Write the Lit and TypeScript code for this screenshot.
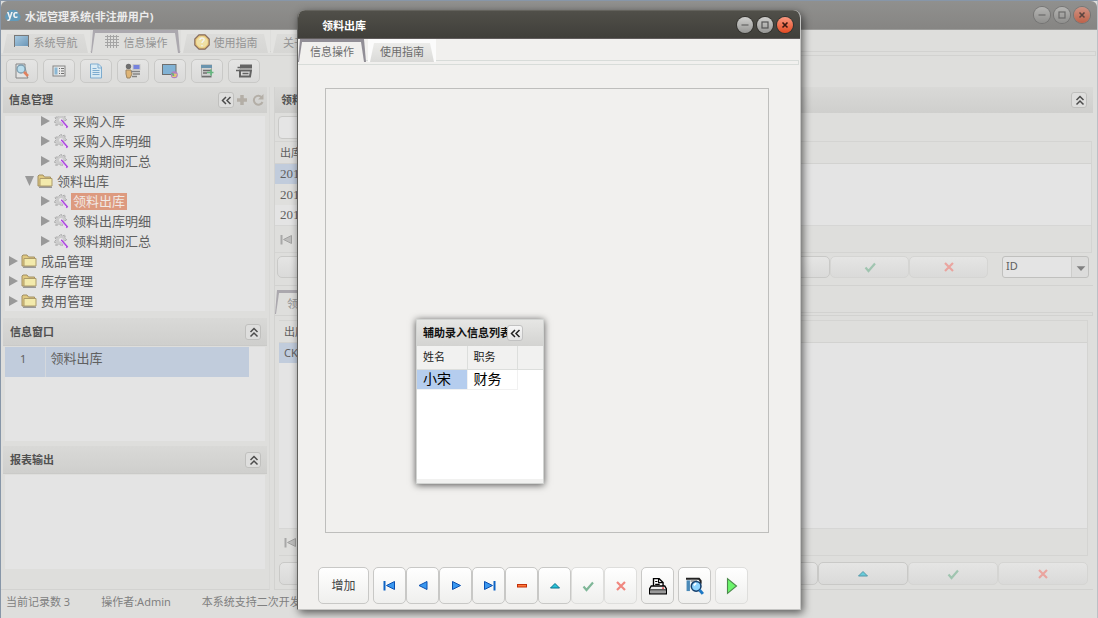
import { LitElement, html, css, svg, nothing } from "lit";
import { customElement, property } from "lit/decorators.js";

const glyphs: Record<string, unknown> = {
  up2: svg`<path d="M4.500 7 8 3.500 11.500 7M4.500 11.500 8 8l3.500 3.500" fill="none" stroke="currentColor" stroke-width="1.500"/>`,
  left2: svg`<path d="M7 4 3.500 7.500 7 11M11.500 4 8 7.500 11.500 11" fill="none" stroke="currentColor" stroke-width="1.500"/>`,
  min: svg`<path d="M4.500 8h7" stroke="#555" stroke-width="1.200"/>`,
  max: svg`<rect x="5" y="5" width="6" height="6" fill="none" stroke="#555" stroke-width="1.200"/>`,
  close: svg`<path d="M5.500 5.500l5 5M10.500 5.500l-5 5" stroke="#3b1710" stroke-width="1.600"/>`,
  logo: svg`<path d="M4 14a4 4 0 0 1-2.500-7A4.500 4.500 0 0 1 7 3a5 5 0 0 1 6.500 3.500A4 4 0 0 1 12 14z" fill="#5d9cc0"/><text x="2" y="11" font-family="Noto Sans" font-weight="bold" font-size="10" fill="#fff">yc</text>`,
  screen: svg`<defs><linearGradient id="s" x2="1" y2="1"><stop stop-color="#8fc4e8"/><stop offset="1" stop-color="#2f71a5"/></linearGradient></defs><rect x="0.500" y="1.500" width="14" height="11" fill="url(#s)" stroke="#444"/><path d="M1 12.500h13" stroke="#ddd"/>`,
  grid: svg`<path d="M1 2.500h14M1 5.500h14M1 8.500h14M1 11.500h14M3.500 1v13M6.500 1v13M9.500 1v13M12.500 1v13" stroke="#888"/>`,
  help: svg`<path d="M5 .8h6l4.200 4.200v6L11 15.200H5L.8 11V5z" fill="#f2b93f" stroke="#5a3320" stroke-width="1.200"/><circle cx="8" cy="8" r="5.800" fill="#fbe48a"/><path d="M6 6c0-3 5-2 4 0-.5 1-2 1.500-2 3M8 11v1.300" fill="none" stroke="#fff" stroke-width="1.500"/>`,
  find: svg`<path d="M2 1h9v3l2 9 1 2H2z" fill="#e8e8e8" stroke="#555"/><circle cx="7" cy="6" r="4" fill="#a5dcf5" stroke="#4a7a96" stroke-width="1.300"/><path d="M10 9l4 4" stroke="#e2501c" stroke-width="2.500"/>`,
  list: svg`<rect x="2" y="3" width="12" height="10" fill="#eee" stroke="#555"/><rect x="3.500" y="4.500" width="3" height="7" fill="#5ea3cf"/><path d="M8 5.500h1M8 8h1M8 10.500h1M10 5.500h3M10 8h3M10 10.500h3" stroke="#333"/>`,
  doc: svg`<path d="M2.500 1h8l3 3v11h-11z" fill="#d5f0ff" stroke="#4a91c8"/><path d="M10 1v4h4M4.500 5.500h4M4.500 7.500h7M4.500 9.500h7M4.500 11.500h7" fill="none" stroke="#4a91c8"/>`,
  people: svg`<circle cx="3.500" cy="3.500" r="2.700" fill="#333"/><path d="M1 7h5l1 4-2 4H2l-1-4z" fill="#e0a040" stroke="#7b541e"/><rect x="8" y="1.500" width="7" height="5" fill="#3c50dc" stroke="#bbb"/><path d="M6 8.500h9M8 11h7M7 13.500h5" stroke="#555" stroke-width="1.500"/>`,
  world: svg`<rect x="0.500" y="1.500" width="13.500" height="10" fill="#4f9bd0" stroke="#333"/><circle cx="12.300" cy="11.800" r="3.500" fill="#9a4fb0"/><path d="M10 14c1-4 3-4 5-3l-1 3z" fill="#e8b840"/><path d="M9.500 11c1-1 2 0 2 2" stroke="#2f9b4b" stroke-width="1.600" fill="none"/>`,
  add: svg`<rect x="2.500" y="2" width="10" height="12" fill="#ccc" stroke="#888"/><rect x="2" y="2" width="11" height="3" fill="#2b6b94"/><path d="M4 7.500h8M4 10h4M3 13.500h9" stroke="#333" stroke-width="1.400"/><path d="M8 9.500h6.500M12 6.500v6" stroke="#21a34c" stroke-width="1.600"/>`,
  form: svg`<path d="M5 2.500h10v2H5zM4 7.500h11l-1 6H4z" fill="#ddd" stroke="#222" stroke-width="2"/><path d="M1.500 4.500h3M0 7.500h3M6.500 10.500h6" stroke="#222" stroke-width="1.600"/>`,
  plus: svg`<path d="M8 3v10M3 8h10" stroke="#a39b90" stroke-width="3.500"/>`,
  redo: svg`<path d="M12 5.500A4.500 4.500 0 1 0 12.500 10" fill="none" stroke="#a39b90" stroke-width="2"/><path d="M13.500 2v5.500H8z" fill="#a39b90"/>`,
  folder: svg`<path d="M1 13V3l1-1h4l1.500 2h6V13z" fill="#dfc060" stroke="#8c7336"/><path d="M3 13V5.500h12V13z" fill="#f8ec9a" stroke="#9d8442"/><path d="M2 14.200h13" stroke="#555"/>`,
  gear: svg`<path d="M8 1l1 2 3-1v3l2 2-3 1-2 5-3-2-3 2 0-3-2-1 2-2-1-3 3 0z" fill="#c4c4c4" stroke="#999" stroke-dasharray="2 1"/><circle cx="8" cy="7" r="2" fill="#eee"/><path d="M8 7l6.500 7.500" stroke="#9b10e0" stroke-width="2"/><path d="M7 7l6 7" stroke="#f3e2fb"/>`,
  first: svg`<path d="M2.500 3v9.500" stroke="#0c63c4" stroke-width="2"/><path d="M12.500 3.500v8L4.500 7.500z" fill="#3a98f0" stroke="#0a4fb0"/>`,
  prev: svg`<path d="M12 3.500v8L4 7.500z" fill="#3a98f0" stroke="#0a4fb0"/>`,
  next: svg`<path d="M4.500 3.500v8l8-4z" fill="#3a98f0" stroke="#0a4fb0"/>`,
  last: svg`<path d="M13.500 3v9.500" stroke="#0c63c4" stroke-width="2"/><path d="M3.500 3.500v8l8-4z" fill="#3a98f0" stroke="#0a4fb0"/>`,
  del: svg`<rect x="3.500" y="6.500" width="9" height="2.500" fill="#ff7a3d" stroke="#c22f08"/>`,
  edit: svg`<path d="M3.500 10 8 5.500l4.500 4.500z" fill="#29c3d8" stroke="#08718c"/>`,
  ok: svg`<path d="M3.500 8.500 6.500 12l6.500-7.500" fill="none" stroke="#7fb798" stroke-width="2.200"/>`,
  no: svg`<path d="M4 4l8 8M12 4l-8 8" stroke="#f0867e" stroke-width="2.200"/>`,
  print: svg`<path d="M4 8V1.500h5L12.500 5v3" fill="#fff" stroke="#000" stroke-width="1.200"/><path d="M8.500 1.500V5h4M5.500 4h2M5.500 6.500h4" fill="none" stroke="#000"/><path d="M2 8h12l1.500 2.500V15H.5v-4.500z" fill="#eee" stroke="#000" stroke-width="1.200"/><path d="M1 11.500h14" stroke="#000"/><path d="M1 13.300h14" stroke="#999" stroke-width="2"/><circle cx="12.500" cy="9.800" r=".8" fill="#d22"/>`,
  preview: svg`<path d="M0 1.500h11.500l1.500 2V6" fill="none" stroke="#222" stroke-width="1.800"/><rect x="0.500" y="3" width="3" height="9.500" fill="#4a8ab8"/><path d="M4 3.500h6" stroke="#aaa" stroke-width="2"/><circle cx="9" cy="8.300" r="4.300" fill="#8fd4ff" stroke="#16406e" stroke-width="1.400"/><path d="M7 7.500l2-2" stroke="#fff" stroke-width="1.500"/><path d="M12 11.500l3 3.500" stroke="#1d78c4" stroke-width="2.600"/>`,
  run: svg`<path d="M4 1.500l8 6.500-8 6.500z" fill="#6cf56c" stroke="#4b8a4b"/>`,
  down: svg`<path d="M3 6h10l-5 5.500z" fill="#777"/>`,
};

@customElement("ui-icon")
export class UiIcon extends LitElement {
  @property() name = "";
  static styles = css`
    :host { display: inline-flex; width: 16px; height: 16px; flex: none; }
    svg { width: 100%; height: 100%; display: block; }
  `;
  render() {
    return html`<svg viewBox="0 0 16 16" aria-hidden="true">${glyphs[this.name] ?? nothing}</svg>`;
  }
}

const base = css`
  * { box-sizing: border-box; }
  :host { font: 11px/16px "Noto Sans", "Noto Sans CJK SC", sans-serif; }
  button { font: inherit; color: inherit; padding: 0; margin: 0; cursor: pointer; }
  table { border-collapse: collapse; border-spacing: 0; table-layout: fixed; }
  th, td { padding: 0; text-align: left; font-weight: normal; }
  h1, h2 { margin: 0; font-size: inherit; font-weight: bold; }
  .circles { display: flex; gap: 4px; }
  .circle {
    width: 16px; height: 16px; border: 0; border-radius: 50%; display: grid; place-items: center;
    background: linear-gradient(#cfcfcd, #969694); box-shadow: 0 0 0 1px #33322e;
  }
  .circle.close { background: linear-gradient(#fa9880, #e44a22); }
  .mini {
    width: 16px; height: 16px; border: 1px solid #c2c2c2; border-radius: 3px; flex: none;
    background: linear-gradient(#f6f6f6, #e4e4e4); display: grid; place-items: center;
  }
  .btn {
    display: grid; place-items: center; border: 1px solid #c8c8c6; border-radius: 5px;
    background: linear-gradient(#ffffff, #efefed);
  }
  .tabs { display: flex; }
  .tab {
    position: relative; isolation: isolate; border: 0; background: none; display: flex;
    align-items: center; justify-content: center; white-space: nowrap;
  }
  .tab::before, .tab::after { content: ""; position: absolute; z-index: -1; }
  .tab::before { inset: 0; background: var(--edge); }
  .tab::after { inset: 4px 0 0; background: var(--face); clip-path: polygon(6px 0, calc(100% - 6px) 0, calc(100% - 2px) 100%, 2px 100%); }
  .tab.on::before { background: var(--rim); clip-path: polygon(2px 0, calc(100% - 2px) 0, 100% 100%, 0 100%); }
  .tab.on::after { inset: 3px 0 0; background: var(--page); clip-path: polygon(4px 0, calc(100% - 5px) 0, calc(100% - 2px) 100%, 1px 100%); }
`;

const circles = () => html`<div class="circles">
  <button class="circle" aria-label="最小化"><ui-icon name="min"></ui-icon></button>
  <button class="circle" aria-label="最大化"><ui-icon name="max"></ui-icon></button>
  <button class="circle close" aria-label="关闭"><ui-icon name="close"></ui-icon></button>
</div>`;

@customElement("entry-dialog")
export class EntryDialog extends LitElement {
  static styles = [base, css`
    :host {
      --rim: #918e96; --page: #f1f0ee; --face: linear-gradient(#ececea, #dadad8); --edge: #fbfbfb;
      display: flex; flex-direction: column; background: var(--page);
      border: 1px solid #c5c5c3; border-left-color: #62625f; border-top: 0; border-radius: 8px 8px 0 0;
      box-shadow: 2px 3px 8px #0009; overflow: hidden;
    }
    .title {
      height: 29px; flex: none; display: flex; align-items: center; justify-content: space-between;
      padding: 0 7px 0 24px; color: #fff; background: linear-gradient(#504f49, #403f3a);
      border-top: 1px solid #64635d; border-bottom: 1px solid #605c5c;
    }
    .title h1 { padding-top: 3px; }
    .tabs { height: 23px; flex: none; color: #6c6c6c; gap: 2px; }
    .tab { width: 68px; padding-top: 3px; }
    .rule { height: 5px; flex: none; margin: -2px 1px 0 0; border: 1px solid #d8dcd9; border-left: 0; }
    .canvas { flex: 1; margin: 23px 31px 34px 27px; border: 1px solid #bebebc; position: relative; }
    .bar { display: flex; flex: none; padding: 0 20px 5px; }
    .bar .btn { width: 33px; height: 37px; }
    .bar .btn.text { width: 51px; margin-right: 4px; font-size: 12px; color: #444; }
    .bar .gap { margin-left: 4px; }
    .bar .gap ui-icon { width: 18px; height: 18px; }
    .bar .soft { border-color: #dededc; }
    .float {
      position: absolute; left: 90px; top: 230px; width: 128px; height: 165px; display: flex; flex-direction: column;
      border: 1px solid #d2d4d2; background: #fff; box-shadow: inset 0 -4px #f1f1f0, 0 1px 7px #000a;
    }
    .head { height: 26px; flex: none; display: flex; align-items: center; padding-left: 6px; background: linear-gradient(#e6e6e4, #d3d3d1); }
    .head h2 { width: 84px; overflow: hidden; white-space: nowrap; color: #111; }
    .mini { color: #222; }
    table { width: 100%; }
    .c { width: 50px; }
    th { height: 23px; padding-left: 6px; background: #f1f1f0; border-right: 1px solid #dcdedc; border-bottom: 1px solid #dcdedc; color: #222; }
    th:last-child { border-right: 0; }
    td { height: 20px; padding-left: 6px; font-size: 14px; line-height: 18px; color: #000; border-right: 1px solid #f1f1f1; border-bottom: 1px solid #f1f1f1; }
    td:last-child { border: 0; }
    td.sel { background: #b5cdee; }
  `];
  render() {
    const nav = [["first", "首条"], ["prev", "上一条"], ["next", "下一条"], ["last", "末条"], ["del", "删除"], ["edit", "编辑"], ["ok", "确定"], ["no", "取消"]];
    return html`
      <header class="title"><h1>领料出库</h1>${circles()}</header>
      <nav class="tabs"><button class="tab on">信息操作</button><button class="tab">使用指南</button></nav>
      <div class="rule"></div>
      <section class="canvas">
        <div class="float">
          <div class="head"><h2>辅助录入信息列表</h2><button class="mini" aria-label="收起"><ui-icon name="left2"></ui-icon></button></div>
          <table>
            <colgroup><col class="c"><col class="c"><col></colgroup>
            <thead><tr><th>姓名</th><th>职务</th><th></th></tr></thead>
            <tbody><tr><td class="sel">小宋</td><td>财务</td><td></td></tr></tbody>
          </table>
        </div>
      </section>
      <footer class="bar">
        <button class="btn text">增加</button>
        ${nav.map(([n, l]) => html`<button class="btn ${n === "ok" || n === "no" ? "soft" : ""}" aria-label=${l}><ui-icon name=${n}></ui-icon></button>`)}
        <button class="btn gap" aria-label="打印"><ui-icon name="print"></ui-icon></button>
        <button class="btn gap" aria-label="预览"><ui-icon name="preview"></ui-icon></button>
        <button class="btn gap soft" aria-label="运行"><ui-icon name="run"></ui-icon></button>
      </footer>`;
  }
}

interface Node { label: string; level: number; kind: "leaf" | "folder"; open?: boolean; selected?: boolean; }

const tree: Node[] = [
  { label: "采购入库", level: 2, kind: "leaf" },
  { label: "采购入库明细", level: 2, kind: "leaf" },
  { label: "采购期间汇总", level: 2, kind: "leaf" },
  { label: "领料出库", level: 1, kind: "folder", open: true },
  { label: "领料出库", level: 2, kind: "leaf", selected: true },
  { label: "领料出库明细", level: 2, kind: "leaf" },
  { label: "领料期间汇总", level: 2, kind: "leaf" },
  { label: "成品管理", level: 0, kind: "folder" },
  { label: "库存管理", level: 0, kind: "folder" },
  { label: "费用管理", level: 0, kind: "folder" },
];

@customElement("app-root")
export class AppRoot extends LitElement {
  static styles = [base, css`
    :host {
      --page: #dededc; --pane: #e4e4e4; --line: #d2d2d0; --rim: #aba8ae; --edge: #e3e3e1;
      --face: linear-gradient(#dcdcda, #d6d6d4);
      display: flex; flex-direction: column; position: relative; height: 100vh; overflow: hidden;
      background: var(--page); color: #606060; border: 1px solid #8796a8; border-right-color: #bcc0c6; border-bottom-color: #bbbbbd;
    }
    ui-icon { opacity: 0.65; }
    .title {
      height: 29px; flex: none; display: flex; align-items: center; padding: 0 7px 0 4px; gap: 4px;
      color: #ececec; background: linear-gradient(#90908e, #868583); border-radius: 6px 6px 0 0; border-bottom: 1px solid #9b9b99;
    }
    .title > ui-icon { opacity: 0.9; }
    .title h1 { flex: 1; padding-top: 3px; }
    .circle { opacity: 0.6; box-shadow: 0 0 0 1px #666; }
    .circle ui-icon { opacity: 1; }
    .tabs { height: 23px; flex: none; color: #949494; gap: 1px; }
    .tab { width: 89px; gap: 4px; padding-top: 3px; }
    .tab ui-icon { margin-bottom: 2px; }
    .tab.more { width: 46px; }
    .rule { height: 5px; flex: none; margin: -2px 1px 0 0; border: 1px solid var(--line); border-left: 0; }
    .tools { display: flex; gap: 5px; padding: 3px 5px 4px; flex: none; }
    .btn { background: linear-gradient(#e5e5e4, #dadad9); border-color: #c9c9c7; }
    .tools .btn { width: 32px; height: 24px; }
    .main { flex: 1; min-height: 0; display: flex; gap: 4px; }
    .side { width: 269px; flex: none; padding: 0 2px; border-right: 1px solid #d8d8d6; border-bottom: 1px solid var(--line); display: flex; flex-direction: column; }
    .head {
      height: 28px; flex: none; display: flex; align-items: center; gap: 0; padding: 0 6px 0 7px;
      background: linear-gradient(#d9d9d7, #cfcfcd); border-bottom: 1px solid #cacac8; color: #505050;
    }
    .head h2 { flex: 1; }
    .head.top { height: 26px; border-bottom: 0; padding: 0 6px; }
    .side .head.top { padding-right: 1px; }
    .mini { background: #dededd; border-color: #c0c0be; color: #333; }
    .mini ui-icon { opacity: 0.85; }
    .tree {
      list-style: none; margin: 3px 2px 7px; padding: 0; height: 195px; overflow: hidden; flex: none; background: var(--pane);
      display: flex; flex-direction: column; justify-content: flex-end; font-size: 13px; line-height: 17px;
    }
    .tree li { height: 20px; flex: none; display: flex; align-items: center; padding-left: 4px; }
    .tree .l1 { padding-left: 20px; }
    .tree .l2 { padding-left: 36px; }
    .arrow { width: 9px; height: 10px; flex: none; background: #999; clip-path: polygon(0 0, 100% 50%, 0 100%); margin-right: 3px; }
    .arrow.open { clip-path: polygon(0 0, 100% 0, 50% 100%); }
    .tree ui-icon { margin-right: 2px; opacity: 0.75; }
    .tree span { padding: 0 2px; }
    .tree .sel { background: #dd9a7f; color: #f1e8e4; }
    .pane { background: var(--pane); height: 94px; flex: none; margin: 1px 2px 5px; }
    .pane table { width: calc(100% - 16px); background: #c1ccdc; }
    .pane td { height: 30px; font-size: 13px; line-height: 18px; vertical-align: top; padding: 2px 0 0 5px; border-left: 1px solid #d4d8dd; }
    .pane td.n { width: 40px; padding: 3px 3px 0 0; text-align: center; font-size: 11px; border: 0; }
    .work { flex: 1; min-width: 0; border-left: 1px solid #d2d2d0; display: flex; flex-direction: column; padding-right: 4px; }
    .query { margin: 3px 3px 0; padding: 0 4px; height: 23px; width: 300px; border: 1px solid #c9c9c7; border-radius: 4px; background: #e5e5e5; }
    .grid { border: 1px solid #d4d4d2; border-left: 0; flex: none; }
    .one { margin: 2px 1px 0 0; }
    .grid table { width: 50%; }
    .grid th { height: 21px; padding: 1px 0 0 5px; }
    .rows { background: var(--pane); border-top: 1px solid var(--line); }
    .one .rows { height: 62px; }
    .one td { height: 20px; padding-left: 5px; font: 13px/18px "Liberation Serif", serif; }
    .one tr:nth-child(2) td { background: #dfdfdd; height: 21px; }
    .grid tr.sel td { background: #c1ccdc; }
    .navi { height: 27px; border-top: 1px solid var(--line); padding: 6px 4px; filter: grayscale(1); opacity: 0.6; }
    .row { display: flex; align-items: flex-start; flex: none; }
    .acts { display: flex; flex: 1; }
    .acts .btn { flex: 1; height: 22px; }
    .acts .soft { border-color: #d5d5d3; }
    .row.a { padding: 3px 4px 7px 2px; gap: 14px; border-bottom: 1px solid var(--line); }
    .pick { position: relative; width: 87px; height: 22px; }
    .pick select {
      appearance: none; width: 100%; height: 100%; margin: 0; border: 1px solid #c0c0be; border-radius: 3px; padding: 0 3px 2px;
      font: inherit; color: inherit; background: linear-gradient(90deg, #e4e4e4 68px, #cdcdcb 68px, #cdcdcb 69px, #dcdcdb 69px);
    }
    .pick ui-icon { position: absolute; right: 1px; top: 5px; pointer-events: none; width: 14px; height: 14px; opacity: 0.9; }
    .work .tabs { margin-top: 4px; height: 24px; }
    .work .tab { width: 68px; }
    .work .rule { height: 4px; margin: -2px 0 0; }
    .two { margin: 4px 5px 0 4px; flex: 1; display: flex; flex-direction: column; }
    .two .rows { flex: 1; }
    .two td { height: 20px; padding-left: 5px; }
    .row.b { padding: 6px 5px 4px 4px; border-bottom: 1px solid var(--line); }
    .row.b .btn { height: 23px; }
    .status { height: 29px; flex: none; display: flex; align-items: center; gap: 31px; padding: 0 5px 5px; color: #808080; white-space: nowrap; }
    entry-dialog { position: absolute; top: 9px; bottom: 9px; left: 0; right: 0; margin: 0 auto; width: 504px; }
  `];

  private head(label: string) {
    return html`<div class="head"><h2>${label}</h2><button class="mini" aria-label="收起"><ui-icon name="up2"></ui-icon></button></div>`;
  }

  private acts() {
    return html`<div class="acts">${[["first", "首条"], ["prev", "上一条"], ["next", "下一条"], ["last", "末条"], ["plus", "增加"], ["del", "删除"], ["edit", "编辑"], ["ok", "确定"], ["no", "取消"]].map(
      ([n, l]) => html`<button class="btn ${n === "ok" || n === "no" ? "soft" : ""}" aria-label=${l}>${n === "first" ? nothing : html`<ui-icon name=${n}></ui-icon>`}</button>`)}</div>`;
  }

  render() {
    return html`
      <header class="title"><ui-icon name="logo"></ui-icon><h1>水泥管理系统(非注册用户)</h1>${circles()}</header>
      <nav class="tabs">
        <button class="tab"><ui-icon name="screen"></ui-icon>系统导航</button>
        <button class="tab on"><ui-icon name="grid"></ui-icon>信息操作</button>
        <button class="tab"><ui-icon name="help"></ui-icon>使用指南</button>
        <button class="tab more">关于</button>
      </nav>
      <div class="rule"></div>
      <div class="tools">
        ${[["find", "查询"], ["list", "列表"], ["doc", "文档"], ["people", "人员"], ["world", "网络"], ["add", "添加"], ["form", "表单"]].map(
          ([n, l]) => html`<button class="btn" aria-label=${l}><ui-icon name=${n}></ui-icon></button>`)}
      </div>
      <main class="main">
        <aside class="side">
          <div class="head top"><h2>信息管理</h2><button class="mini" aria-label="收起"><ui-icon name="left2"></ui-icon></button><ui-icon name="plus"></ui-icon><ui-icon name="redo"></ui-icon></div>
          <ul class="tree">
            ${tree.map((n) => html`<li class="l${n.level}"><i class="arrow ${n.open ? "open" : ""}"></i><ui-icon name=${n.kind === "leaf" ? "gear" : "folder"}></ui-icon><span class=${n.selected ? "sel" : ""}>${n.label}</span></li>`)}
          </ul>
          ${this.head("信息窗口")}
          <div class="pane"><table><tr><td class="n">1</td><td>领料出库</td></tr></table></div>
          ${this.head("报表输出")}
          <div class="pane"></div>
        </aside>
        <section class="work">
          <div class="head top"><h2>领料出库</h2><button class="mini" aria-label="收起"><ui-icon name="up2"></ui-icon></button></div>
          <input class="query" aria-label="查询内容">
          <div class="grid one">
            <table><tr><th>出库日期</th></tr></table>
            <div class="rows"><table><tr class="sel"><td>201</td></tr><tr><td>201</td></tr><tr><td>201</td></tr></table></div>
            <div class="navi"><ui-icon name="first"></ui-icon></div>
          </div>
          <div class="row a">${this.acts()}<div class="pick"><select aria-label="排序字段"><option>ID</option></select><ui-icon name="down"></ui-icon></div></div>
          <nav class="tabs"><button class="tab on">领料明细</button></nav>
          <div class="rule"></div>
          <div class="grid two">
            <table><tr><th>出库编号</th></tr></table>
            <div class="rows"><table><tr class="sel"><td>CK</td></tr></table></div>
            <div class="navi"><ui-icon name="first"></ui-icon></div>
          </div>
          <div class="row b">${this.acts()}</div>
        </section>
      </main>
      <footer class="status"><span>当前记录数 3</span><span>操作者:Admin</span><span>本系统支持二次开发</span></footer>
      <entry-dialog></entry-dialog>`;
  }
}
